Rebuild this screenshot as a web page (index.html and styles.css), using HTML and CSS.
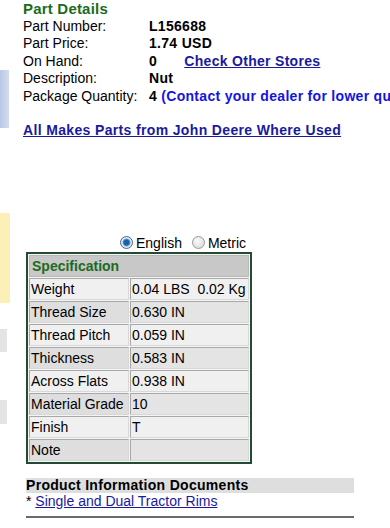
FILE: index.html
```
<!DOCTYPE html>
<html lang="en">
<head>
    <meta charset="UTF-8">
    <meta name="viewport" content="width=device-width, initial-scale=1.0">
    <title>Part Details</title>
    <link rel="stylesheet" href="styles.css">
</head>
<body>
    <div id="page">
        <div id="sidebar">
            <div class="side-blue"></div>
            <div class="side-yellow"></div>
            <div class="side-gray"></div>
            <div class="side-gray second"></div>
        </div>
        <div id="main">
            <h2>Part Details</h2>
            <div class="details">
                <div class="lbl">Part Number:</div><div class="val">L156688</div>
                <div class="lbl">Part Price:</div><div class="val">1.74 USD</div>
                <div class="lbl">On Hand:</div><div class="val">0 <a href="#" class="stores">Check Other Stores</a></div>
                <div class="lbl">Description:</div><div class="val">Nut</div>
                <div class="lbl">Package Quantity:</div><div class="val">4 <span class="contact">(Contact your dealer for lower quantities)</span></div>
            </div>
            <a href="#" class="where-used">All Makes Parts from John Deere Where Used</a>

            <div class="units">
                <label><span class="radio checked"></span>English</label>
                <label><span class="radio"></span>Metric</label>
            </div>

            <table class="spec">
                <tr><th colspan="2">Specification</th></tr>
                <tr class="odd"><td>Weight</td><td>0.04 LBS&nbsp; 0.02 Kg</td></tr>
                <tr class="even"><td>Thread Size</td><td>0.630 IN</td></tr>
                <tr class="odd"><td>Thread Pitch</td><td>0.059 IN</td></tr>
                <tr class="even"><td>Thickness</td><td>0.583 IN</td></tr>
                <tr class="odd"><td>Across Flats</td><td>0.938 IN</td></tr>
                <tr class="even"><td>Material Grade</td><td>10</td></tr>
                <tr class="odd"><td>Finish</td><td>T</td></tr>
                <tr class="even"><td>Note</td><td></td></tr>
            </table>

            <div class="docs">
                <div class="docs-head">Product Information Documents</div>
                <div class="docs-item">* <a href="#">Single and Dual Tractor Rims</a></div>
                <hr>
            </div>
        </div>
    </div>
</body>
</html>
```

FILE: styles.css
```
body {
    margin: 0;
    font-family: "Liberation Sans", Arial, sans-serif;
    font-size: 14px;
    color: #000;
    background: #fff;
    overflow: hidden;
}
#page {
    display: flex;
    width: 390px;
    overflow: hidden;
}
#sidebar {
    width: 10px;
    flex-shrink: 0;
}
.side-blue {
    margin-top: 70px;
    height: 58px;
    width: 9px;
    background: linear-gradient(to right, #b8c7e6, #d3ddf0);
}
.side-yellow {
    margin-top: 85px;
    height: 90px;
    width: 10px;
    background: #fdefb8;
}
.side-gray {
    margin-top: 26px;
    height: 23px;
    width: 7px;
    background: #e4e4e4;
}
.side-gray.second {
    margin-top: 48px;
    height: 24px;
}
#main {
    padding-left: 13px;
    width: 340px;
    white-space: nowrap;
}
h2 {
    margin: 0;
    font-size: 15px;
    line-height: 17px;
    color: #1d6b1d;
    letter-spacing: 0.2px;
}
.details {
    display: grid;
    grid-template-columns: 126px auto;
    grid-auto-rows: 17.5px;
    align-items: center;
    line-height: 16px;
}
.val {
    font-weight: bold;
    letter-spacing: 0.3px;
}
.stores {
    margin-left: 23px;
    color: #1a1a9c;
}
.contact {
    color: #1414e0;
}
.where-used {
    display: inline-block;
    margin-top: 17px;
    font-weight: bold;
    color: #1a1a9c;
    letter-spacing: 0.35px;
}
.units {
    margin-top: 97px;
    padding-left: 97px;
    display: flex;
    gap: 10px;
    font-size: 14px;
    line-height: 16px;
}
.units label {
    display: flex;
    align-items: center;
    gap: 3px;
}
.radio {
    width: 13px;
    height: 13px;
    border-radius: 50%;
    border: 1px solid #9a9a9a;
    background: radial-gradient(circle at 40% 35%, #fafafa, #d4d4d4);
    box-sizing: border-box;
    display: inline-block;
}
.radio.checked {
    border-color: #4a6a8a;
    background: radial-gradient(circle, #1b5fa8 0 2.5px, #5fa0d8 3.5px, #e8eef5 4.5px, #cfd8e2 6px);
}
.spec {
    margin-top: 1px;
    margin-left: 3px;
    width: 226px;
    border: 2px solid #234a32;
    border-spacing: 1px;
    background: #f4f4f4;
}
.spec th {
    text-align: left;
    color: #1d6b1d;
    background: #c8c8c8;
    height: 20px;
    padding: 0 2px;
    font-size: 14px;
    border: 1px solid #b8b8b8;
}
.spec td {
    height: 20px;
    padding: 0 1px;
    border: 1px solid #a8a8a8;
    border-right-color: #d8d8d8;
    border-bottom-color: #d8d8d8;
}
.spec td:first-child {
    width: 96px;
}
.spec tr.odd td {
    background: #f0f0f0;
}
.spec tr.even td {
    background: #dedede;
}
.spec tr.even td + td {
    background: #e4e4e4;
}
.docs {
    margin-top: 14px;
    margin-left: 3px;
    width: 328px;
}
.docs-head {
    background: #dedede;
    font-weight: bold;
    font-size: 14px;
    line-height: 15px;
    letter-spacing: 0.3px;
}
.docs-item {
    line-height: 17px;
}
.docs-item a {
    color: #1a1a9c;
}
hr {
    margin: 6px 0 0;
    border: none;
    border-top: 2px solid #6a6a6a;
}
```
